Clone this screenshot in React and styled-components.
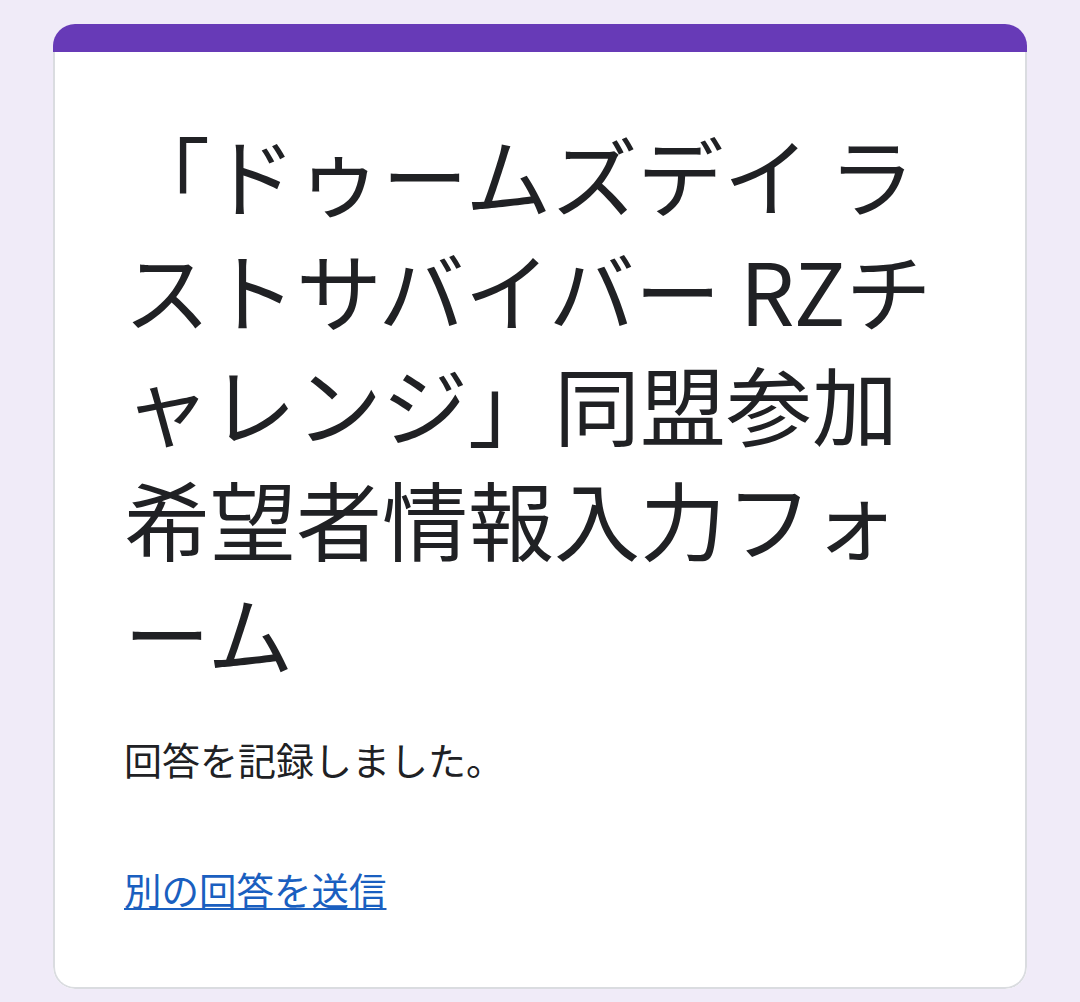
import React from "react";
import styled, { createGlobalStyle } from "styled-components";

const GlobalStyle = createGlobalStyle`
  html, body {
    margin: 0;
    padding: 0;
    background: #f0ebf8;
  }
  body {
    font-family: "Noto Sans CJK JP", "Noto Sans", sans-serif;
    color: #202124;
  }
`;

const Page = styled.div`
  min-height: 1002px;
  box-sizing: border-box;
  padding: 24px 53px 15px 53px;
`;

const Card = styled.div`
  border-radius: 22px;
  overflow: hidden;
  background: #ffffff;
`;

const TopBar = styled.div`
  height: 28px;
  background: #673ab7;
`;

const CardBody = styled.div`
  border: 2px solid #dadce0;
  border-top: none;
  border-radius: 0 0 22px 22px;
  padding: 65px 66px 72px 69px;
`;

const Title = styled.h1`
  margin: 0;
  font-family: "Noto Sans CJK JP", sans-serif;
  font-weight: 400;
  font-size: 86px;
  line-height: 114.5px;
  color: #202124;
`;

const Message = styled.p`
  margin: 43px 0 0 0;
  font-size: 38px;
  line-height: 52px;
  color: #202124;
`;

const Links = styled.div`
  margin-top: 78px;
`;

const Link = styled.a`
  font-size: 37.5px;
  line-height: 52px;
  color: #1a5fc0;
  text-decoration: underline;
  text-underline-offset: 3px;
  text-decoration-thickness: 2px;
  cursor: pointer;
`;

export default function App() {
  return (
    <>
      <GlobalStyle />
      <Page>
        <Card>
          <TopBar />
          <CardBody>
            <Title>
              「ドゥームズデイ ラストサバイバー RZチャレンジ」同盟参加希望者情報入力フォーム
            </Title>
            <Message>回答を記録しました。</Message>
            <Links>
              <Link href="#">別の回答を送信</Link>
            </Links>
          </CardBody>
        </Card>
      </Page>
    </>
  );
}
